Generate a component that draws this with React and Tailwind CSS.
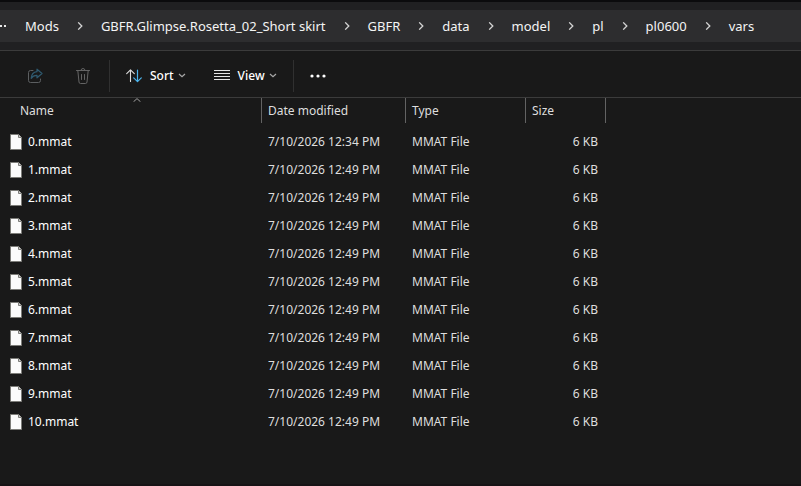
import React from 'react';

const crumbs = [
  'Mods',
  'GBFR.Glimpse.Rosetta_02_Short skirt',
  'GBFR',
  'data',
  'model',
  'pl',
  'pl0600',
  'vars',
];

const files = Array.from({ length: 11 }, (_, i) => ({
  name: `${i}.mmat`,
  modified: i === 0 ? '7/10/2026 12:34 PM' : '7/10/2026 12:49 PM',
  type: 'MMAT File',
  size: '6 KB',
}));

function ChevronRight() {
  return (
    <svg className="w-2 h-2 shrink-0" viewBox="0 0 8 8" fill="none" stroke="#d6d6d6" strokeWidth="1.3" aria-hidden="true">
      <path d="M2.2 0.4 L5.8 4 L2.2 7.6" />
    </svg>
  );
}

function ChevronDown() {
  return (
    <svg className="w-2 h-2 shrink-0" viewBox="0 0 8 8" fill="none" stroke="#a8a8a8" strokeWidth="1.2" aria-hidden="true">
      <path d="M1 2 L4 4.8 L7 2" />
    </svg>
  );
}

function ShareIcon() {
  return (
    <svg className="w-4 h-4" viewBox="0 0 16 16" fill="none" strokeLinejoin="round" strokeLinecap="round" aria-hidden="true">
      <path d="M6 2.5 H3.5 A2 2 0 0 0 1.5 4.5 V12.5 A2 2 0 0 0 3.5 14.5 H11.5 A2 2 0 0 0 13.5 12.5 V11" stroke="#5c5f61" />
      <path d="M10 1.2 L15 5.5 L10 9.8 V7.4 C7.3 7.3 5.6 8.2 4.2 10.3 C4.5 6.6 6.6 4 10 3.7 Z" stroke="#2f5a70" strokeWidth="1.2" />
    </svg>
  );
}

function TrashIcon() {
  return (
    <svg className="w-4 h-4" viewBox="0 0 16 16" fill="none" stroke="#646464" strokeLinecap="round" strokeLinejoin="round" aria-hidden="true">
      <path d="M1.5 2.5 H14.5 M6 2.5 A2 2 0 0 1 10 2.5" />
      <path d="M2.8 2.5 L4 14 A1.6 1.6 0 0 0 5.6 15.5 H10.4 A1.6 1.6 0 0 0 12 14 L13.2 2.5 M6.5 6.5 V11.5 M9.5 6.5 V11.5" />
    </svg>
  );
}

function SortIcon() {
  return (
    <svg className="w-4 h-4" viewBox="0 0 16 16" fill="none" strokeLinecap="round" strokeLinejoin="round" aria-hidden="true">
      <path d="M4.5 13.5 V2 M0.7 5.7 L4.5 1.9 L8.3 5.7" stroke="#dedede" strokeWidth="1.1" />
      <path d="M11.5 2 V13.5 M7.7 9.8 L11.5 13.6 L15.3 9.8" stroke="#4cb5ee" strokeWidth="1.2" />
    </svg>
  );
}

function ViewIcon() {
  return (
    <svg className="w-4 h-4" viewBox="0 0 16 16" stroke="#e4e4e4" aria-hidden="true">
      <path d="M0 2.5 H16 M0 5.5 H16 M0 8.5 H16 M0 11.5 H16" />
    </svg>
  );
}

function FileIcon() {
  return (
    <svg className="w-3 h-4 shrink-0" viewBox="0 0 12 16" aria-hidden="true">
      <path d="M0.5 0.5 H8.5 L11.5 3.5 V15.5 H0.5 Z" fill="#fbfbfb" stroke="#7c7c78" />
      <path d="M8.5 0.5 V3.5 H11.5" fill="#d0d0d0" stroke="#7c7c78" />
    </svg>
  );
}

export default function App() {
  return (
    <div className="min-h-screen bg-[#191919] text-[#e8e8e8] font-['Noto_Sans','Open_Sans',sans-serif] text-xs overflow-x-hidden border-b-2 border-[#161315]">
      {/* Address bar */}
      <header className="bg-[#202022] border-t-2 border-t-[#0b0b0d] border-b border-b-[#3b3b3b] py-2">
        <nav aria-label="Path" className="flex items-center h-8 pt-px bg-[#2d2d2f] text-[13px] text-[#f4f4f4]">
          <button type="button" aria-label="Hidden folders" className="w-[25px] shrink-0">
            <svg className="w-2 h-2" viewBox="0 0 8 8" fill="#e8e8e8" aria-hidden="true">
              <path d="M0 2 H2 V4 H0 Z M4 2 H6 V4 H4 Z" />
            </svg>
          </button>
          <ol className="flex items-center gap-[17px]">
            {crumbs.map((crumb, i) => (
              <li key={crumb} className="flex items-center gap-[17px] whitespace-nowrap">
                {i > 0 && <ChevronRight />}
                <a href="#">{crumb}</a>
              </li>
            ))}
          </ol>
        </nav>
      </header>

      {/* Command bar */}
      <div role="toolbar" className="flex items-center h-[47px] pt-[3px] pl-[27px] border-b border-[#3b3b3b] text-white font-medium">
        <button type="button" aria-label="Share" disabled>
          <ShareIcon />
        </button>
        <button type="button" aria-label="Delete" disabled className="ml-8">
          <TrashIcon />
        </button>
        <span className="w-px h-8 ml-[18px] bg-[#303030]" />
        <button type="button" className="flex items-center ml-4">
          <SortIcon />
          <span className="ml-2 mr-1">Sort</span>
          <ChevronDown />
        </button>
        <button type="button" className="flex items-center ml-7">
          <ViewIcon />
          <span className="ml-2 mr-1">View</span>
          <ChevronDown />
        </button>
        <span className="w-px h-8 ml-4 bg-[#303030]" />
        <button type="button" aria-label="See more" className="ml-4">
          <svg className="w-4 h-4" viewBox="0 0 16 16" fill="#ffffff" aria-hidden="true">
            <circle cx="2" cy="8" r="1.6" />
            <circle cx="8" cy="8" r="1.6" />
            <circle cx="14" cy="8" r="1.6" />
          </svg>
        </button>
      </div>

      {/* File list */}
      <table className="table-fixed w-full border-separate border-spacing-0 text-left whitespace-nowrap">
        <colgroup>
          <col className="w-[262px]" />
          <col className="w-36" />
          <col className="w-[120px]" />
          <col className="w-20" />
          <col />
        </colgroup>
        <thead>
          <tr className="h-[25px] text-[#dedede]">
            <th scope="col" className="relative font-normal pl-5 border-r border-[#636363]">
              Name
              <svg className="absolute top-0 left-[133px] w-2 h-1" viewBox="0 0 8 4" fill="none" stroke="#a0a0a0" aria-hidden="true">
                <path d="M0.5 3.8 L4 0.6 L7.5 3.8" />
              </svg>
            </th>
            <th scope="col" className="font-normal pl-1.5 border-r border-[#636363]">Date modified</th>
            <th scope="col" className="font-normal pl-1.5 border-r border-[#636363]">Type</th>
            <th scope="col" className="font-normal pl-1.5 border-r border-[#636363]">Size</th>
            <td />
          </tr>
        </thead>
        <tbody className="before:block before:h-[5px]">
          {files.map((file) => (
            <tr key={file.name} className="h-7 text-[#dedede]">
              <td className="pl-2.5 text-white">
                <span className="flex items-center gap-1.5">
                  <FileIcon />
                  {file.name}
                </span>
              </td>
              <td className="pl-1.5">{file.modified}</td>
              <td className="pl-1.5">{file.type}</td>
              <td className="pr-2 text-right">{file.size}</td>
              <td />
            </tr>
          ))}
        </tbody>
      </table>
    </div>
  );
}
